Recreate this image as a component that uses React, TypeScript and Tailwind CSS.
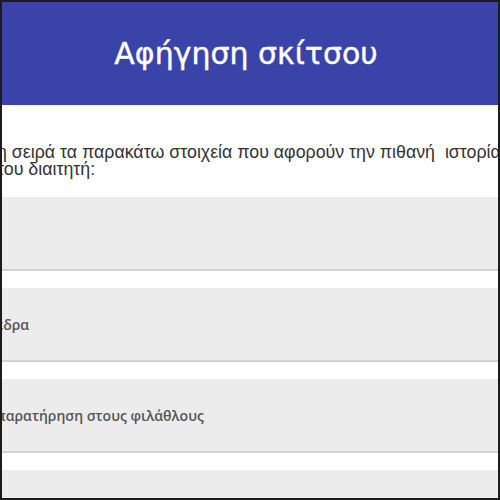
export default function App() {
  const rows = ['', 'έδρα', 'παρατήρηση στους φιλάθλους', ''];

  return (
    <div className="box-border h-[500px] w-[500px] overflow-hidden border-2 border-[#1c1c1c] bg-white">
      <div className="flex h-[103px] items-center justify-center bg-[#3a43a8] pr-2">
        <h1 className="text-[30px] leading-none text-white [font-family:'DejaVu_Sans',sans-serif] [-webkit-text-stroke:0.4px_white]">Αφήγηση σκίτσου</h1>
      </div>

      <p className="-ml-[5px] mt-[39px] whitespace-nowrap text-[17.8px] leading-[17px] text-[#333] [font-family:'Liberation_Sans',Arial,sans-serif]">
        η σειρά τα παρακάτω στοιχεία που αφορούν την πιθανή&nbsp; ιστορία
        <br />
        του διαιτητή:
      </p>

      <div className="mt-[19px] flex flex-col gap-[17px]">
        {rows.map((text, i) => (
          <div key={i} className="flex h-[74px] items-center border-b-2 border-[#d2d2d2] bg-[#ececec]">
            <span className="-ml-[6px] whitespace-nowrap text-[14px] font-semibold text-[#555] [font-family:'Open_Sans',sans-serif]">{text}</span>
          </div>
        ))}
      </div>
    </div>
  );
}
